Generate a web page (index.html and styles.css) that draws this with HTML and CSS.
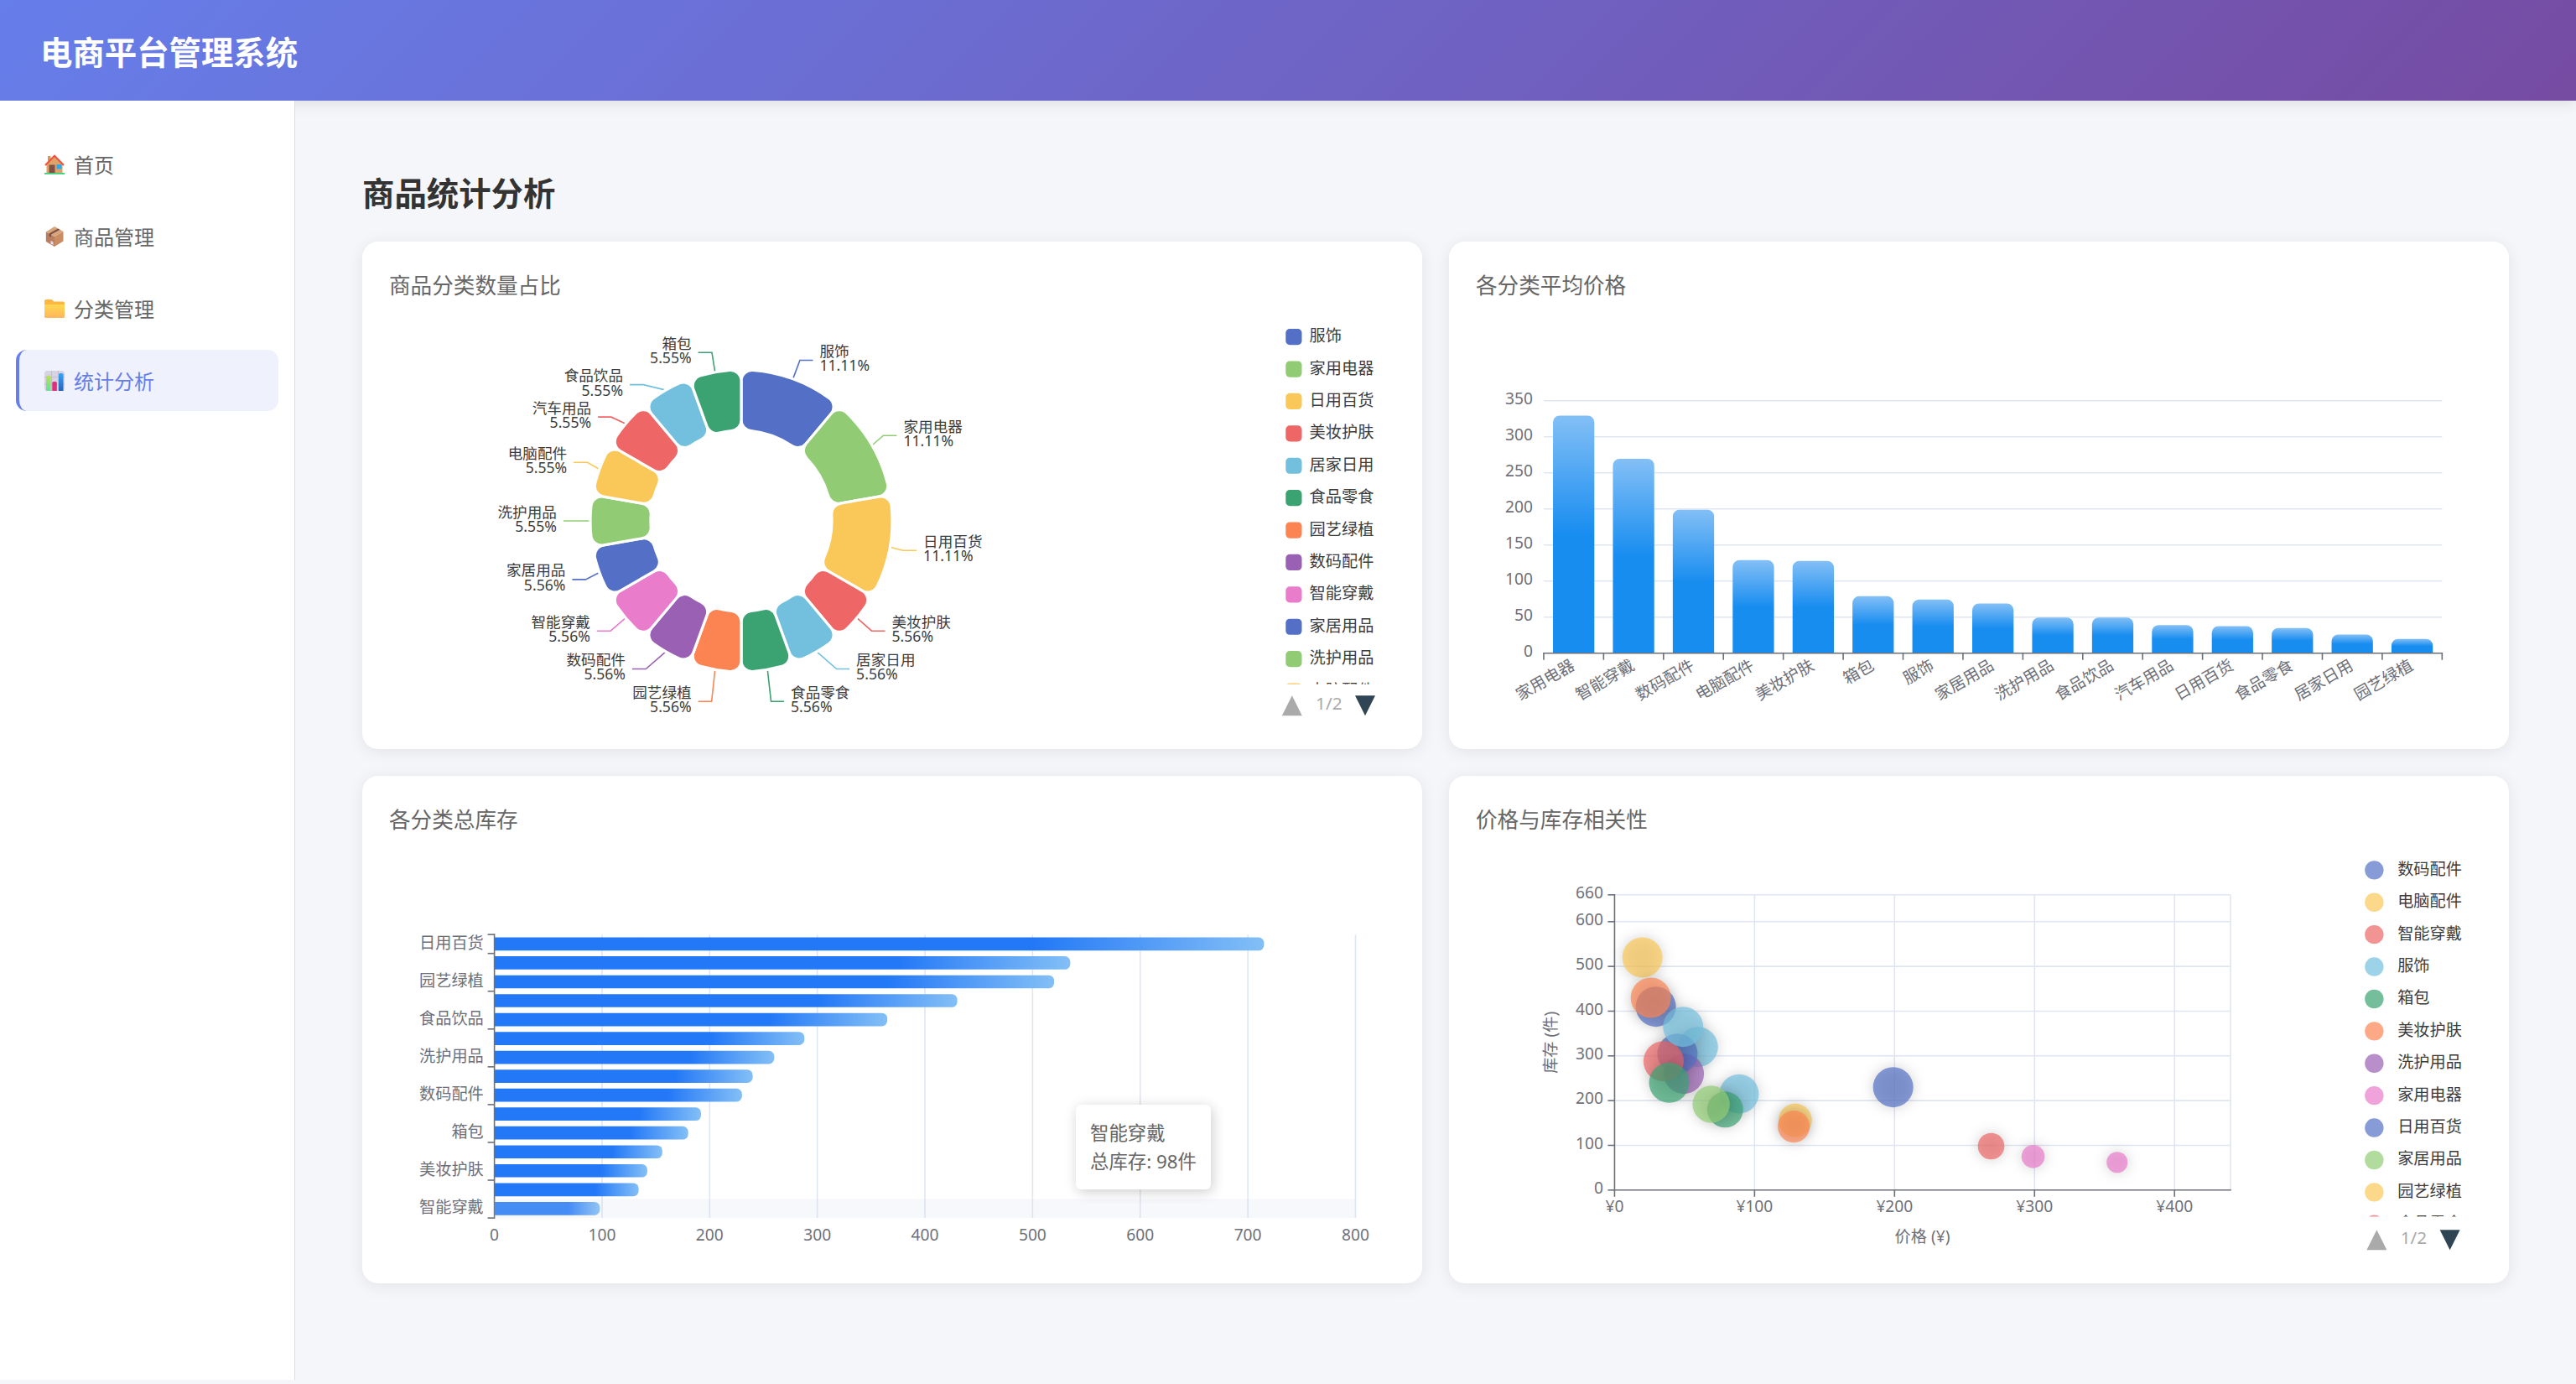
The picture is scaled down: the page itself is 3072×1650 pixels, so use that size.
FILE: index.html
```html
<!DOCTYPE html>
<html lang="zh-CN">
<head>
    <meta charset="UTF-8">
    <meta name="viewport" content="width=device-width, initial-scale=1.0">
    <title>电商平台管理系统</title>
    <link rel="stylesheet" href="styles.css">
</head>
<body>
    <header class="header">
        <h1>电商平台管理系统</h1>
    </header>

    <div class="layout">
        <nav class="sidebar">
            <a class="menu-item">
                <svg class="menu-icon" viewBox="0 0 24 24">
                    <path d="M4 2h3.5v9H4z" fill="#d59a5e"/>
                    <path d="M2.500 12 12 2.500 21.500 12v10.500h-19z" fill="#dfa36a"/>
                    <path d="M5.500 12.500h7v10h-7z" fill="#7d5146"/>
                    <path d="M14.500 12h6v5.500h-6z" fill="#2fa9e8"/>
                    <path d="M1 13 12 1.800 23 13" fill="none" stroke="#f0523d" stroke-width="2.200"/>
                    <path d="M0 22h24v1.800H0z" fill="#3ad07a"/>
                </svg>
                <span>首页</span>
            </a>
            <a class="menu-item">
                <svg class="menu-icon" viewBox="0 0 24 24">
                    <path d="M12 0 22.500 6 12 12 1.800 6.500z" fill="#d9a67c"/>
                    <path d="M1.800 6.500 12 12v12L1.800 18z" fill="#b97e60"/>
                    <path d="M22.500 6 12 12v12l10.500-6.500z" fill="#c98c63"/>
                    <path d="M16 2.500 5.500 8.500v3l2.500 1.200V9.500L18.500 3.800z" fill="#7d5146"/>
                    <path d="m7.500 17 3 1.600v3.600l-3-1.600z" fill="#eadcf0"/>
                </svg>
                <span>商品管理</span>
            </a>
            <a class="menu-item">
                <svg class="menu-icon" viewBox="0 0 24 24">
                    <defs>
                        <linearGradient id="folder" x1="0" y1="0" x2="0" y2="1">
                            <stop offset="0" stop-color="#ffd84f"/>
                            <stop offset="1" stop-color="#ffb55c"/>
                        </linearGradient>
                    </defs>
                    <path d="M0 3a2 2 0 0 1 2-2h6.500l3 2.500H22a2 2 0 0 1 2 2V12H0z" fill="#fdb63f"/>
                    <path d="M0 7h24v14.500a1.500 1.500 0 0 1-1.500 1.500h-21A1.500 1.500 0 0 1 0 21.500z" fill="url(#folder)"/>
                </svg>
                <span>分类管理</span>
            </a>
            <a class="menu-item active">
                <svg class="menu-icon" viewBox="0 0 24 24">
                    <defs>
                        <linearGradient id="barGreen" x1="0" y1="0" x2="0" y2="1">
                            <stop offset="0" stop-color="#b8e34f"/>
                            <stop offset="1" stop-color="#5fe39a"/>
                        </linearGradient>
                        <linearGradient id="barBlue" x1="0" y1="0" x2="0" y2="1">
                            <stop offset="0" stop-color="#35a5f7"/>
                            <stop offset="1" stop-color="#2b62b8"/>
                        </linearGradient>
                    </defs>
                    <rect width="24" height="24" rx="3.500" fill="#d8d3e2"/>
                    <path d="M0 7.500h24M0 16h24M8.500 0v24M16.500 0v24" stroke="#bdb6c8" stroke-width=".8"/>
                    <path d="M2 7.500A1.500 1.500 0 0 1 3.500 6H6a1.500 1.500 0 0 1 1.500 1.500V24H2z" fill="url(#barGreen)"/>
                    <path d="M9.300 14.500A1.500 1.500 0 0 1 10.800 13h2.500a1.500 1.500 0 0 1 1.500 1.500V24H9.300z" fill="#dd2f7e"/>
                    <path d="M17 4.500A1.500 1.500 0 0 1 18.500 3H21a1.500 1.500 0 0 1 1.500 1.500V24H17z" fill="url(#barBlue)"/>
                </svg>
                <span>统计分析</span>
            </a>
        </nav>

        <main class="main">
            <h2 class="page-title">商品统计分析</h2>
            <div class="chart-grid">
                <section class="card">
                    <h3>商品分类数量占比</h3>
                    <div class="chart"><svg id="pieChart" viewBox="0 0 750 300"></svg></div>
                </section>
                <section class="card">
                    <h3>各分类平均价格</h3>
                    <div class="chart"><svg id="priceChart" viewBox="0 0 750 300"></svg></div>
                </section>
                <section class="card">
                    <h3>各分类总库存</h3>
                    <div class="chart">
                        <svg id="stockChart" viewBox="0 0 750 300"></svg>
                        <div class="tooltip">智能穿戴<br>总库存: 98件</div>
                    </div>
                </section>
                <section class="card">
                    <h3>价格与库存相关性</h3>
                    <div class="chart"><svg id="scatterChart" viewBox="0 0 750 300"></svg></div>
                </section>
            </div>
        </main>
    </div>

    <script src="charts.js"></script>
</body>
</html>
```
FILE: styles.css
```css
* {
    margin: 0;
    padding: 0;
    box-sizing: border-box;
}
body {
    font-family: "Noto Sans", "Noto Sans CJK SC", sans-serif;
    background-color: #f5f6fa;
    color: #333;
}
.header {
    height: 120px;
    padding: 0 48px;
    display: flex;
    align-items: center;
    background: linear-gradient(135deg, #667eea 0%, #764ba2 100%);
    box-shadow: 0 3px 16px rgba(0, 0, 0, 0.1);
    color: white;
}
.header h1 {
    font-size: 38.4px;
    line-height: 58px;
    padding-top: 4px;
}
.layout {
    display: flex;
    height: 1525px;
}
.sidebar {
    position: relative; /* keeps the header shadow off the menu */
    width: 352px;
    flex-shrink: 0;
    padding: 39px 19px 0;
    display: flex;
    flex-direction: column;
    gap: 13px;
    background-color: #fff;
    border-right: 1px solid #dcdde1;
}
.menu-item {
    height: 73px;
    display: flex;
    align-items: center;
    gap: 11px;
    padding-left: 30px;
    border-left: 4px solid transparent;
    border-radius: 13px;
    font-size: 24px;
    color: #666;
}
.menu-item.active {
    background-color: #eff1fd;
    border-left-color: #667eea;
    color: #667eea;
}
.menu-icon {
    width: 24px;
    height: 24px;
}
.main {
    flex: 1;
    padding: 80px 80px 0;
}
.page-title {
    font-size: 38.4px;
    line-height: 60px;
    margin-bottom: 28px;
}
.chart-grid {
    display: grid;
    grid-template-columns: 1fr 1fr;
    gap: 32px;
}
.card {
    height: 604.8px;
    padding: 32px;
    background-color: #fff;
    border-radius: 19px;
    box-shadow: 0 3px 19px rgba(0, 0, 0, 0.08);
}
.card h3 {
    font-size: 25.6px;
    line-height: 41px;
    font-weight: normal;
    color: #666;
    margin-bottom: 19.8px;
}
.chart {
    position: relative;
    height: 480px;
}
.chart svg {
    display: block;
    width: 1200px;
    height: 480px;
}

/* Chart parts, sizes are in viewBox units */
.chart text {
    font-size: 12px;
    fill: #3c3c3c;
}
.chart .pie-label {
    font-size: 11px;
}
.chart .axis-label {
    fill: #6e7079;
}
.chart .page-text {
    font-size: 13px;
    fill: #aaa;
}
.axis {
    stroke: #6e7079;
    stroke-width: 1;
}
.grid-line {
    stroke: #e0e6f1;
    stroke-width: 1;
}
.slice {
    stroke: #fff;
    stroke-width: 2;
}
.label-line {
    fill: none;
    stroke-width: 1;
}
.point {
    fill-opacity: 0.7;
    filter: drop-shadow(0 0 5px rgba(0, 0, 0, 0.25));
}
.legend-dot {
    fill-opacity: 0.7;
}
.hover-band {
    fill: rgba(210, 219, 238, 0.2);
}
.tooltip {
    position: absolute;
    left: 819px;
    top: 299.4px;
    padding: 17px;
    background-color: #fff;
    border-radius: 6px;
    box-shadow: 2px 3px 16px rgba(0, 0, 0, 0.2);
    font-size: 22.4px;
    line-height: 33.6px;
    color: #666;
    white-space: nowrap;
}
```
FILE: charts.js
```js
const palette = {
    blue: '#5470c6', green: '#91cc75', yellow: '#fac858', red: '#ee6666', sky: '#73c0de',
    teal: '#3ba272', orange: '#fc8452', purple: '#9a60b4', pink: '#ea7ccc'
};

function text(x, y, str, anchor, cls, extra) {
    return `<text x="${x}" y="${y}" text-anchor="${anchor || 'start'}" class="${cls || ''}" ${extra || ''}>${str}</text>`;
}

function line(x1, y1, x2, y2, cls) {
    return `<line x1="${x1}" y1="${y1}" x2="${x2}" y2="${y2}" class="${cls}"/>`;
}

// Page buttons under a scrolling legend
function pager(x, y) {
    return `<path d="M${x} ${y + 14.8}h15l-7.5 -15z" fill="#aaa"/>`
        + text(x + 35, y + 10.2, '1/2', 'middle', 'page-text')
        + `<path d="M${x + 54.5} ${y - 0.2}h15l-7.5 15z" fill="#2f4554"/>`;
}

// ---------- Pie ----------
// name, share, color, elbow x, line end x, line y
const pieData = [
    ['服饰', 11.11, 'blue', 306.2, 315.9, 30.3],
    ['家用电器', 11.11, 'green', 368.4, 378.4, 86.4],
    ['日用百货', 11.11, 'yellow', 383, 393.2, 172],
    ['美妆护肤', 5.56, 'red', 359.7, 369.7, 232],
    ['居家日用', 5.56, 'sky', 333.5, 343.2, 260.3],
    ['食品零食', 5.56, 'teal', 284.7, 294.4, 284.5],
    ['园艺绿植', 5.56, 'orange', 240.4, 230.4, 284.5],
    ['数码配件', 5.56, 'purple', 191.4, 181.2, 260.3],
    ['智能穿戴', 5.56, 'pink', 165.1, 154.9, 232],
    ['家居用品', 5.56, 'blue', 146.5, 136.5, 193.7],
    ['洗护用品', 5.55, 'green', 140.1, 129.9, 150],
    ['电脑配件', 5.55, 'yellow', 147.8, 137.6, 106.4],
    ['汽车用品', 5.55, 'red', 165.6, 155.7, 72.6],
    ['食品饮品', 5.55, 'sky', 189.6, 179.4, 48.5],
    ['箱包', 5.55, 'teal', 240.6, 230.4, 24.5]
];

function polar(r, a) {
    return (262.5 + r * Math.sin(a)).toFixed(2) + ' ' + (150 - r * Math.cos(a)).toFixed(2);
}

// Ring sector with rounded corners
function sector(a0, a1) {
    const R = 112.5, r = 67.5, c = 8;
    const ao = Math.asin(c / (R - c)), ai = Math.asin(c / (r + c));
    const ro = Math.sqrt((R - c) ** 2 - c * c), ri = Math.sqrt((r + c) ** 2 - c * c);
    return `M${polar(ro, a0)}A${c} ${c} 0 0 1 ${polar(R, a0 + ao)}A${R} ${R} 0 0 1 ${polar(R, a1 - ao)}`
        + `A${c} ${c} 0 0 1 ${polar(ro, a1)}L${polar(ri, a1)}A${c} ${c} 0 0 1 ${polar(r, a1 - ai)}`
        + `A${r} ${r} 0 0 0 ${polar(r, a0 + ai)}A${c} ${c} 0 0 1 ${polar(ri, a0)}Z`;
}

function drawPie() {
    let out = '', legend = '', angle = 0;
    pieData.forEach(([name, share, color, ex, lx, y], i) => {
        const step = (share > 6 ? 40 : 20) * Math.PI / 180;
        const right = lx > 262;
        const tx = lx + (right ? 5 : -5);
        const anchor = right ? 'start' : 'end';
        out += `<path d="M${polar(112.5, angle + step / 2)}L${ex} ${y}H${lx}" class="label-line" stroke="${palette[color]}"/>`;
        out += `<path d="${sector(angle, angle + step)}" class="slice" fill="${palette[color]}"/>`;
        out += text(tx, y - 2.8, name, anchor, 'pie-label') + text(tx, y + 8.1, share + '%', anchor, 'pie-label');
        angle += step;
        if (i < 12) {
            legend += `<rect x="668.3" y="${6.9 + i * 24}" width="12" height="12" rx="3" fill="${palette[color]}"/>`
                + text(686, 16.4 + i * 24, name);
        }
    });
    document.getElementById('pieChart').innerHTML =
        `<defs><clipPath id="pieClip"><rect x="660" y="0" width="90" height="271.7"/></clipPath></defs>`
        + out + `<g clip-path="url(#pieClip)">${legend}</g>` + pager(665.5, 280.4);
}

// ---------- Average price ----------
const priceData = [
    ['家用电器', 329.5], ['智能穿戴', 269.5], ['数码配件', 199], ['电脑配件', 129], ['美妆护肤', 128],
    ['箱包', 79], ['服饰', 74.5], ['家居用品', 69], ['洗护用品', 49.5], ['食品饮品', 49.5],
    ['汽车用品', 39], ['日用百货', 37.5], ['食品零食', 35], ['居家日用', 25.9], ['园艺绿植', 19.9]
];

function drawPrice() {
    const x0 = 50.6, x1 = 720.2, y0 = 248.6, y1 = 60.5;
    const step = (x1 - x0) / priceData.length;
    let out = `<defs><linearGradient id="priceFill" x1="0" y1="0" x2="0" y2="1">
        <stop offset="0" stop-color="#83bff6"/><stop offset=".5" stop-color="#188df0"/><stop offset="1" stop-color="#188df0"/>
        </linearGradient></defs>`;
    for (let v = 0; v <= 350; v += 50) {
        const y = y0 - (y0 - y1) * v / 350;
        if (v) out += line(x0, y, x1, y, 'grid-line');
        out += text(42.5, y + 2.7, v, 'end', 'axis-label');
    }
    priceData.forEach(([name, v], i) => {
        const h = (y0 - y1) * v / 350, cx = x0 + step * (i + 0.5);
        out += `<path d="M${cx - 15.4} ${y0}v${5 - h}a5 5 0 0 1 5 -5h20.8a5 5 0 0 1 5 5v${h - 5}z" fill="url(#priceFill)"/>`;
        out += text(cx - 0.4, y0 + 7.8, name, 'end', 'axis-label', `dy="4" transform="rotate(-30 ${cx} ${y0 + 8})"`);
    });
    for (let i = 0; i <= priceData.length; i++) {
        out += line(x0 + step * i, y0, x0 + step * i, y0 + 5, 'axis');
    }
    out += line(x0 - 0.5, y0, x1 + 0.5, y0, 'axis');
    document.getElementById('priceChart').innerHTML = out;
}

// ---------- Total stock ----------
const stockData = [
    ['日用百货', 715], ['', 535], ['园艺绿植', 520], ['', 430], ['食品饮品', 365],
    ['', 288], ['洗护用品', 260], ['', 240], ['数码配件', 230], ['', 192],
    ['箱包', 180], ['', 156], ['美妆护肤', 142], ['', 134], ['智能穿戴', 98]
];

function drawStock() {
    const x0 = 78.5, x1 = 720.3, y0 = 60.1, y1 = 271.3;
    const step = (y1 - y0) / stockData.length;
    let out = `<defs><linearGradient id="stockFill">
        <stop offset="0" stop-color="#2378f7"/><stop offset=".7" stop-color="#2378f7"/><stop offset="1" stop-color="#83bff6"/>
        </linearGradient></defs>`;
    for (let v = 0; v <= 800; v += 100) {
        const x = x0 + (x1 - x0) * v / 800;
        if (v) out += line(x, y0, x, y1, 'grid-line');
        out += text(x, 288, v, 'middle', 'axis-label');
    }
    stockData.forEach(([name, v], i) => {
        const w = (x1 - x0) * v / 800, cy = y0 + step * (i + 0.5);
        out += `<path d="M${x0} ${cy - 4.9}h${w - 4}a4 4 0 0 1 4 4v1.8a4 4 0 0 1 -4 4h${4 - w}z" fill="url(#stockFill)"/>`;
        if (name) out += text(70.5, cy + 3.2, name, 'end', 'axis-label');
    });
    [0, 1, 3, 5, 7, 9, 11, 13, 15].forEach(i => {
        out += line(x0 - 5, y0 + step * i, x0, y0 + step * i, 'axis');
    });
    out += line(x0, y0 - 0.5, x0, y1 + 0.5, 'axis');
    out += `<rect x="${x0}" y="${y1 - step}" width="${x1 - x0}" height="${step}" class="hover-band"/>`;
    document.getElementById('stockChart').innerHTML = out;
}

// ---------- Price / stock ----------
const points = [
    [199, 230, 'blue'], [129, 156, 'yellow'], [269, 98, 'red'],
    [59.5, 320, 'sky'], [89, 215, 'sky'], [79, 180, 'teal'], [128, 142, 'orange'],
    [49.5, 260, 'purple'], [299, 75, 'pink'], [359, 62, 'pink'],
    [29.5, 410, 'blue'], [44.9, 305, 'blue'], [69, 192, 'green'],
    [19.9, 520, 'yellow'], [35, 288, 'red'], [49, 365, 'sky'], [39, 240, 'teal'], [25.9, 430, 'orange']
];
const scatterLegend = [
    ['数码配件', 'blue'], ['电脑配件', 'yellow'], ['智能穿戴', 'red'], ['服饰', 'sky'],
    ['箱包', 'teal'], ['美妆护肤', 'orange'], ['洗护用品', 'purple'], ['家用电器', 'pink'],
    ['日用百货', 'blue'], ['家居用品', 'green'], ['园艺绿植', 'yellow'], ['食品零食', 'red']
];

function drawScatter() {
    const x0 = 103.4, x1 = 562.5, y0 = 250.5, y1 = 30.5;
    const px = v => x0 + (x1 - x0) * v / 440;
    const py = v => y0 - (y0 - y1) * v / 660;
    let out = '<defs><clipPath id="scatterClip"><rect x="650" y="0" width="100" height="270.3"/></clipPath></defs>';
    [0, 100, 200, 300, 400, 440].forEach(v => {
        if (v) out += line(px(v), y0, px(v), y1, 'grid-line');
        if (v < 440) out += line(px(v), y0, px(v), y0 + 5, 'axis') + text(px(v), y0 + 16.6, '¥' + v, 'middle', 'axis-label');
    });
    [0, 100, 200, 300, 400, 500, 600, 660].forEach(v => {
        if (v) out += line(x0, py(v), x1, py(v), 'grid-line');
        out += line(x0 - 5, py(v), x0, py(v), 'axis') + text(95, py(v) + 2.7, v, 'end', 'axis-label');
    });
    out += line(x0 - 0.5, y0, x1 + 0.5, y0, 'axis') + line(x0, y0, x0, y1 - 0.5, 'axis');
    points.forEach(([p, s, color]) => {
        const r = Math.min(15, Math.sqrt(s));
        out += `<circle cx="${px(p)}" cy="${py(s)}" r="${r}" class="point" fill="${palette[color]}"/>`;
    });
    out += text(332.8, 289.3, '价格 (¥)', 'middle', 'axis-label');
    out += text(56, 140.5, '库存 (件)', 'middle', 'axis-label', 'dy="4.3" transform="rotate(-90 56 140.5)"');
    out += '<g clip-path="url(#scatterClip)">';
    scatterLegend.forEach(([name, color], i) => {
        out += `<circle cx="669.6" cy="${12.1 + i * 24}" r="7" class="legend-dot" fill="${palette[color]}"/>`
            + text(687, 15.5 + i * 24, name);
    });
    out += '</g>' + pager(664, 280.4);
    document.getElementById('scatterChart').innerHTML = out;
}

drawPie();
drawPrice();
drawStock();
drawScatter();
```
